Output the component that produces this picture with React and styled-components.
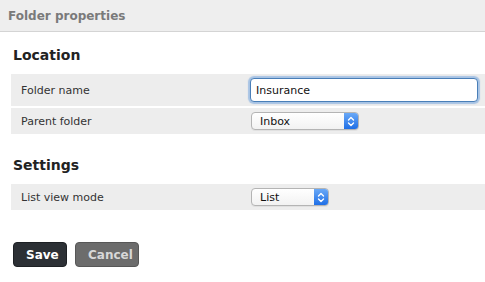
import styled, { createGlobalStyle } from 'styled-components';

const GlobalStyle = createGlobalStyle`
  html, body {
    margin: 0;
    padding: 0;
    background: #fff;
    font-family: "DejaVu Sans", "Liberation Sans", sans-serif;
  }
`;

const sections = [
  {
    title: 'Location',
    rows: [
      { label: 'Folder name', kind: 'input', value: 'Insurance' },
      { label: 'Parent folder', kind: 'select', value: 'Inbox', width: 108 },
    ],
  },
  {
    title: 'Settings',
    rows: [{ label: 'List view mode', kind: 'select', value: 'List', width: 78 }],
  },
];

const Arrows = () => (
  <svg width="8" height="11" viewBox="0 0 8 11" fill="none">
    <path d="M1.5 4 L4 1.5 L6.5 4" stroke="#fff" strokeWidth="1.4" strokeLinecap="round" strokeLinejoin="round" />
    <path d="M1.5 7 L4 9.5 L6.5 7" stroke="#fff" strokeWidth="1.4" strokeLinecap="round" strokeLinejoin="round" />
  </svg>
);

const App = () => {
  return (
    <>
      <GlobalStyle />
      <Page>
        <Header>Folder properties</Header>
        <Body>
          {sections.map((section) => (
            <Section key={section.title}>
              <SectionTitle>{section.title}</SectionTitle>
              <Rows>
                {section.rows.map((row) => (
                  <Row key={row.label} $tall={row.kind === 'input'}>
                    <Label>{row.label}</Label>
                    <Field>
                      {row.kind === 'input' ? (
                        <TextInput defaultValue={row.value} />
                      ) : (
                        <Select style={{ width: row.width }}>
                          <SelectValue>{row.value}</SelectValue>
                          <SelectArrow>
                            <Arrows />
                          </SelectArrow>
                        </Select>
                      )}
                    </Field>
                  </Row>
                ))}
              </Rows>
            </Section>
          ))}
          <Actions>
            <Button $primary>Save</Button>
            <Button>Cancel</Button>
          </Actions>
        </Body>
      </Page>
    </>
  );
};

// STYLED COMPONENTS

const Page = styled.div`
  width: 485px;
  height: 282px;
  background: #fff;
`;

const Header = styled.div`
  height: 32px;
  box-sizing: border-box;
  padding: 0 8px;
  display: flex;
  align-items: center;
  background: #eeeeee;
  border-bottom: 1px solid #d4d4d4;
  font-size: 12px;
  font-weight: bold;
  color: #7a7a7a;
`;

const Body = styled.div`
  padding: 14px 0 0 11px;
`;

const Section = styled.div`
  margin-bottom: 22px;
`;

const SectionTitle = styled.h2`
  margin: 0 0 10px 2px;
  font-size: 14px;
  line-height: 18px;
  font-weight: bold;
  color: #222;
`;

const Rows = styled.div`
  display: flex;
  flex-direction: column;
  gap: 2px;
`;

const Row = styled.div`
  display: grid;
  grid-template-columns: 239px 1fr;
  align-items: center;
  height: ${(p) => (p.$tall ? '32px' : '26px')};
  background: #ededed;
`;

const Label = styled.div`
  padding-left: 10px;
  font-size: 11px;
  color: #333;
`;

const Field = styled.div`
  display: flex;
  align-items: center;
  padding-right: 7px;
`;

const TextInput = styled.input`
  box-sizing: border-box;
  width: 228px;
  height: 24px;
  padding: 0 5px;
  font-family: inherit;
  font-size: 11px;
  color: #111;
  background: #fff;
  border: 1px solid #4a7fb8;
  border-radius: 4px;
  outline: none;
  box-shadow: 0 0 1px 2px rgba(110, 160, 220, 0.55);
`;

const Select = styled.div`
  box-sizing: border-box;
  margin-left: 1px;
  height: 18px;
  display: flex;
  align-items: stretch;
  border: 1px solid #b4b4b4;
  border-radius: 4px;
  overflow: hidden;
  background: linear-gradient(#ffffff, #f2f2f2);
  box-shadow: 0 1px 0 rgba(0, 0, 0, 0.05);
`;

const SelectValue = styled.span`
  flex: 1;
  display: flex;
  align-items: center;
  padding-left: 8px;
  font-size: 11px;
  color: #111;
`;

const SelectArrow = styled.span`
  width: 14px;
  display: flex;
  align-items: center;
  justify-content: center;
  background: linear-gradient(#6aa9f7, #1f6fe6);
`;

const Actions = styled.div`
  display: flex;
  gap: 8px;
  margin-top: 32px;
  padding-left: 2px;
`;

const Button = styled.button`
  box-sizing: border-box;
  height: 25px;
  padding: 0 12px;
  font-family: inherit;
  font-size: 12px;
  font-weight: bold;
  border-radius: 4px;
  cursor: pointer;
  color: ${(p) => (p.$primary ? '#fff' : '#d8d8d8')};
  background: ${(p) => (p.$primary ? '#2c3035' : '#6c6c6c')};
  border: 1px solid ${(p) => (p.$primary ? '#1d2024' : '#575757')};
  width: ${(p) => (p.$primary ? '54px' : '64px')};
`;

export default App;
